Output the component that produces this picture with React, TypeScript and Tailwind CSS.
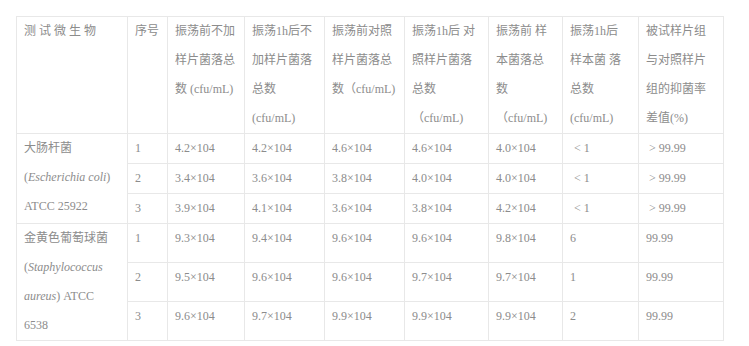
import React from "react";

const th = "border border-[#e8e8e8] px-[7px] py-0 align-top text-left font-normal";
const td = "border border-[#e8e8e8] px-[7px] py-0 align-top";

const LT = <span className="ml-[4px]">{"< 1"}</span>;
const GT = <span className="ml-[3px]">{"> 99.99"}</span>;

const g1: React.ReactNode[][] = [
  ["1", "4.2×104", "4.2×104", "4.6×104", "4.6×104", "4.0×104", LT, GT],
  ["2", "3.4×104", "3.6×104", "3.8×104", "4.0×104", "4.0×104", LT, GT],
  ["3", "3.9×104", "4.1×104", "3.6×104", "3.8×104", "4.2×104", LT, GT],
];
const g2: React.ReactNode[][] = [
  ["1", "9.3×104", "9.4×104", "9.6×104", "9.6×104", "9.8×104", "6", "99.99"],
  ["2", "9.5×104", "9.6×104", "9.6×104", "9.7×104", "9.7×104", "1", "99.99"],
  ["3", "9.6×104", "9.7×104", "9.9×104", "9.9×104", "9.9×104", "2", "99.99"],
];

export default function App() {
  return (
    <div
      className="bg-white w-[749px] h-[346px] p-4 text-[12px] leading-[29px] text-[#8c8c8c]"
      style={{ fontFamily: '"Liberation Serif", "Noto Sans CJK SC", serif' }}
    >
      <table className="border-collapse table-fixed w-[707px]">
        <colgroup>
          <col className="w-[111px]" />
          <col className="w-[40px]" />
          <col className="w-[77px]" />
          <col className="w-[80px]" />
          <col className="w-[80px]" />
          <col className="w-[84px]" />
          <col className="w-[74px]" />
          <col className="w-[76px]" />
          <col className="w-[85px]" />
        </colgroup>
        <thead>
          <tr>
            <th className={th}>测 试 微 生 物</th>
            <th className={th}>序号</th>
            <th className={th}>振荡前不加<br />样片菌落总<br />数 (cfu/mL)</th>
            <th className={th}>振荡1h后不<br />加样片菌落<br />总数<br />(cfu/mL)</th>
            <th className={th}>振荡前对照<br />样片菌落总<br />数（cfu/mL)</th>
            <th className={th}>振荡1h后 对<br />照样片菌落<br />总数<br />（cfu/mL)</th>
            <th className={th}>振荡前 样<br />本菌落总<br />数<br />（cfu/mL)</th>
            <th className={th}>振荡1h后<br />样本菌 落<br />总数<br />(cfu/mL)</th>
            <th className={th}>被试样片组<br />与对照样片<br />组的抑菌率<br />差值(%)</th>
          </tr>
        </thead>
        <tbody>
          {g1.map((r, i) => (
            <tr key={"a" + i}>
              {i === 0 && (
                <td className={td} rowSpan={3}>
                  大肠杆菌<br />(<i>Escherichia coli</i>)<br />ATCC 25922
                </td>
              )}
              {r.map((c, j) => (
                <td key={j} className={td}>{c}</td>
              ))}
            </tr>
          ))}
          {g2.map((r, i) => (
            <tr key={"b" + i} className="h-[39px]">
              {i === 0 && (
                <td className={td} rowSpan={3}>
                  金黄色葡萄球菌<br />(<i>Staphylococcus</i><br /><i>aureus</i>) ATCC<br />6538
                </td>
              )}
              {r.map((c, j) => (
                <td key={j} className={td}>{c}</td>
              ))}
            </tr>
          ))}
        </tbody>
      </table>
    </div>
  );
}
